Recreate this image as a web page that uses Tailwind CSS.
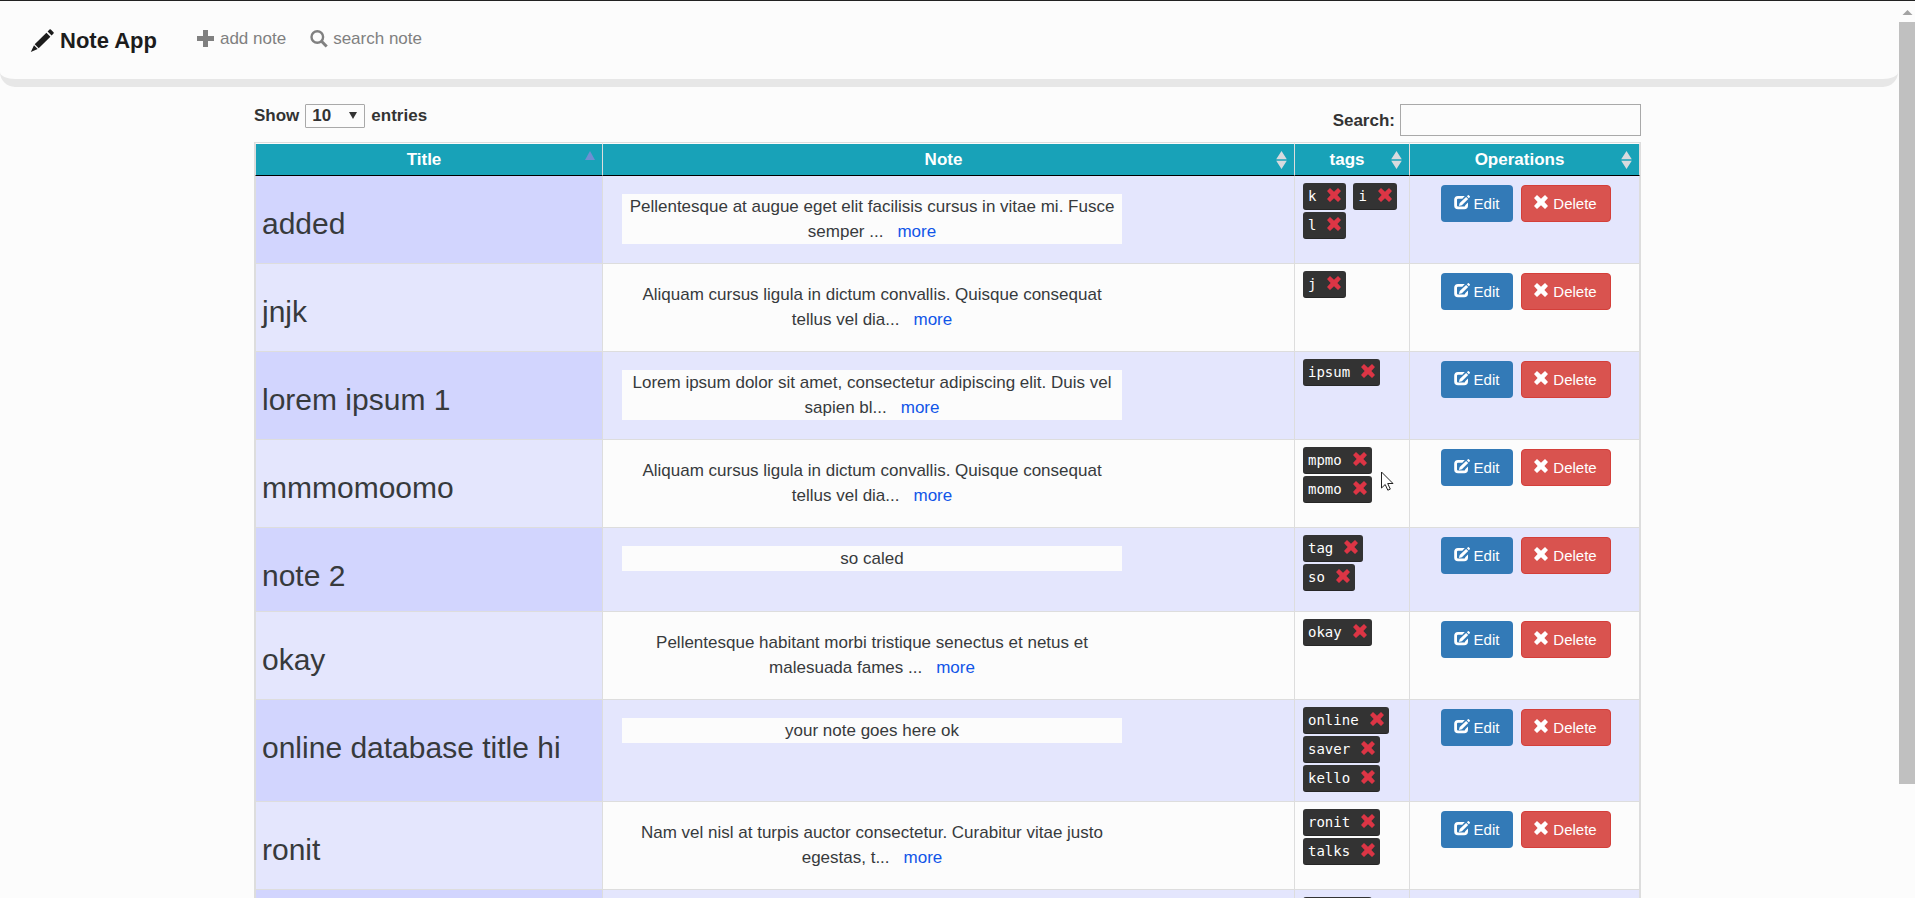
<!DOCTYPE html>
<html lang="en">
<head>
<meta charset="utf-8">
<title>Note App</title>
<script src="https://cdn.jsdelivr.net/npm/@tailwindcss/browser@4"></script>
</head>
<body class="flex h-screen overflow-hidden border-t border-[#222] bg-[#fcfcfc] font-['Liberation_Sans',Arial,sans-serif] text-[17px] leading-[25px] text-[#333]">
<svg class="hidden" aria-hidden="true">
  <symbol id="x" viewBox="0 0 14 14"><path d="M3 0 7 3.700 11 0 14 3 10.400 7l3.600 4-3 3L7 10.300l-4 3.700L0 11l3.600-4L0 3Z"/></symbol>
  <symbol id="edit" viewBox="0 0 16 15"><path d="M10.800 1H4Q.2 1 .2 4.800v5.600Q.2 14.200 4 14.200h6.200q3.800 0 3.800-3.800V7.600l-2.800 2.700v.3q0 1-1 1H4q-1 0-1-1V4.700q0-1 1-1h4.300Z"/><path d="M12.100 1.900 14.200 4 7.900 10.300 4.900 11.100 5.700 8ZM12.900 1.200 13.900.2q.5-.3.9.1l1 1q.4.4 0 .9l-1 1Z"/></symbol>
  <symbol id="sort" viewBox="0 0 11 18"><path d="M5.500 0 10.800 8.200H.2ZM5.500 18 10.800 9.800H.2Z"/></symbol>
</svg>

<div class="min-w-0 flex-1 overflow-hidden">
  <nav class="mr-px flex h-[86px] items-start rounded-b-[15px] border-b-8 border-[#e7e7e7] pl-[30px]">
    <a href="#" class="mt-[27px] flex items-center gap-[6px] text-[22px] font-bold text-[#1c1c1c]">
      <svg class="size-6" viewBox="0 0 24 24" fill="currentColor"><path d="M4.700 15.300 16.400 3.700 20.400 7.700 8.700 19.300ZM4 16.300 7.700 20 .8 23ZM17.600 2.500 19.500.6q.7-.6 1.300 0l2.700 2.700q.6.6 0 1.300l-1.900 1.900Z"/></svg>Note App</a>
    <a href="#" class="ml-10 mt-[25px] flex items-center gap-[6px] text-[#808080]">
      <svg class="size-[17px]" viewBox="0 0 17 17" fill="currentColor"><path d="M6 0h5v6h6v5h-6v6H6v-6H0V6h6Z"/></svg>add note</a>
    <a href="#" class="ml-6 mt-[25px] flex items-center gap-[5px] text-[#808080]">
      <svg class="size-[18px]" viewBox="0 0 18 18" fill="none" stroke="currentColor"><circle cx="7.300" cy="7" r="5.800" stroke-width="2.400"/><path d="m11.500 11.300 5.200 5.200" stroke-width="3"/></svg>search note</a>
  </nav>

  <main class="pr-1">
    <div class="mx-auto max-w-[1387px] pt-[17px]">
      <div class="flex h-[38px] items-start justify-between font-bold">
        <label class="flex items-center gap-[6px] leading-6" for="len">Show
          <span class="relative flex">
            <select id="len" class="h-6 w-[60px] appearance-none rounded-[1px] border border-[#a9a9a9] bg-[#fcfcfc] pl-[6px] leading-5"><option>10</option><option>25</option><option>50</option></select>
            <svg class="pointer-events-none absolute right-[8px] top-[8px] h-[7px] w-2" viewBox="0 0 8 7"><path d="M0 0h8L4 7Z" fill="#333"/></svg>
          </span>
          entries</label>
        <label class="flex items-center gap-[5px]" for="find">Search:
          <input id="find" type="search" class="h-8 w-[241px] appearance-none border border-[#a9a9a9] bg-[#fcfcfc] px-2 font-normal"></label>
      </div>
      <table class="w-full table-fixed border-separate border-spacing-0 border border-[#ddd]">
        <colgroup><col class="w-[347px]"><col><col class="w-[115px]"><col class="w-[231px]"></colgroup>
        <thead id="head"></thead>
        <tbody id="rows" class="align-top"></tbody>
      </table>
    </div>
  </main>
</div>

<div class="flex w-4 flex-col bg-[#fcfcfc]" aria-hidden="true">
  <svg class="h-[21px] w-4" viewBox="0 0 16 21"><path d="M3.500 14 8.500 9l5 5Z" fill="#a3a3a3"/></svg>
  <div class="h-[85%] w-4 bg-[#c0c0c0]"></div>
</div>
<svg class="pointer-events-none absolute left-[1381px] top-[471px] h-5 w-[13px]" viewBox="0 0 13 20" aria-hidden="true"><path d="M.5 1v16l3.700-3.500 2.600 5.700 2.500-1.100-2.600-5.600h5.300Z" fill="#fff" stroke="#222"/></svg>

<script>
const more = '<a href="#" class="ml-[14px] inline-block text-[#1155e8]">more</a>';
const data = [
  ['added', 'Pellentesque at augue eget elit facilisis cursus in vitae mi. Fusce semper ...', 1, ['k','i','l']],
  ['jnjk', 'Aliquam cursus ligula in dictum convallis. Quisque consequat tellus vel dia...', 1, ['j']],
  ['lorem ipsum 1', 'Lorem ipsum dolor sit amet, consectetur adipiscing elit. Duis vel sapien bl...', 1, ['ipsum']],
  ['mmmomoomo', 'Aliquam cursus ligula in dictum convallis. Quisque consequat tellus vel dia...', 1, ['mpmo','momo']],
  ['note 2', 'so caled', 0, ['tag','so']],
  ['okay', 'Pellentesque habitant morbi tristique senectus et netus et malesuada fames ...', 1, ['okay']],
  ['online database title hi', 'your note goes here ok', 0, ['online','saver','kello']],
  ['ronit', 'Nam vel nisl at turpis auctor consectetur. Curabitur vitae justo egestas, t...', 1, ['ronit','talks']],
  ['todo', 'so caled', 0, ['todo']]
];
document.getElementById('head').innerHTML = '<tr>' + ['Title','Note','tags','Operations'].map((h, i) => `
  <th scope="col" class="relative h-[33px] border-b border-l border-t border-b-black border-l-[#ddd] border-t-[#fcfcfc] bg-[#18a2b8] p-0 pr-[10px] text-center leading-[31px] text-white last:border-r last:border-r-[#ddd]">${h}${
    i ? '<svg class="absolute right-[7px] top-[7px] h-[18px] w-[11px] fill-[#d8dade]"><use href="#sort"/></svg>'
      : '<svg class="absolute right-[7px] top-[7px] h-[9px] w-[10px]" viewBox="0 0 10 9"><path d="M5 0 10 9H0Z" fill="#6f8fd2"/></svg>'}</th>`).join('') + '</tr>';
document.getElementById('rows').innerHTML = data.map(([t, n, m, tags], i) => `
  <tr class="${i % 2 ? 'bg-[#fcfcfc]' : 'bg-[#e4e6fd]'}">
    <td class="border-b border-l border-[#ddd] pb-[19px] pl-[6px] pt-[31px] text-[30px] leading-[33px] text-[#373a3c] ${i % 2 ? 'bg-[#e4e6fd]' : 'bg-[#d2d5fe]'}">${t}</td>
    <td class="border-b border-l border-[#ddd] pb-[19px] pl-[19px] pt-[18px]"><p class="w-[500px] bg-[#fcfcfc] text-center text-[#373a3c]">${n}${m ? more : ''}</p></td>
    <td class="border-b border-l border-[#ddd] pb-[9px] pl-2 pr-1 pt-[7px]"><div class="flex flex-wrap gap-x-[7px] gap-y-[2px]">${tags.map(g => `
      <kbd class="flex h-[27px] items-center gap-[11px] rounded-[3px] bg-[#333] px-[5px] font-['DejaVu_Sans_Mono',monospace] text-[14px] text-white shadow-[inset_0_-1px_0_rgba(0,0,0,0.25)]">${g}<button type="button" aria-label="Remove tag ${g}" class="mb-[3px]"><svg class="size-[14px] fill-[#dc3545]"><use href="#x"/></svg></button></kbd>`).join('')}</div></td>
    <td class="border-b border-l border-r border-[#ddd] pl-[2px] pt-[9px]"><div class="flex justify-center gap-2 text-[15px] leading-[21px] text-white">
      <button type="button" class="flex h-[37px] w-[72px] items-center justify-center gap-1 rounded bg-[#337ab7] pb-px"><svg class="mb-px h-[15px] w-4 fill-white"><use href="#edit"/></svg>Edit</button>
      <button type="button" class="flex h-[37px] w-[90px] items-center justify-center gap-[5px] rounded border border-[#d43f3a] bg-[#d9534f] pb-px"><svg class="mb-[3px] size-[14px] fill-white"><use href="#x"/></svg>Delete</button>
    </div></td>
  </tr>`).join('');
</script>
</body>
</html>
